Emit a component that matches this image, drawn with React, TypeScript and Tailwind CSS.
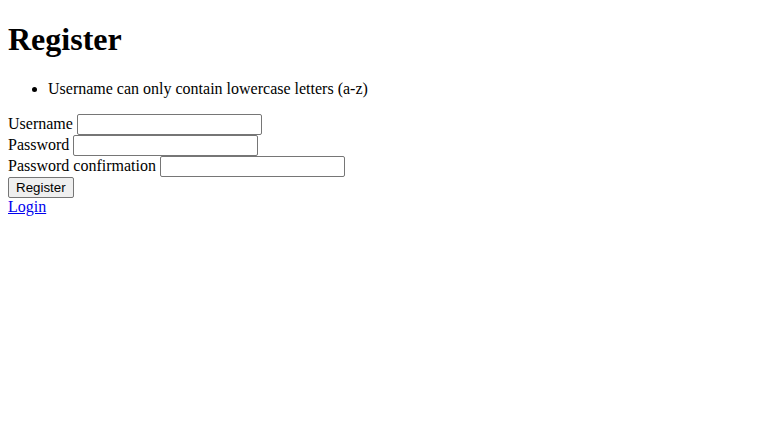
import React from "react";

const inputCls =
  "inline-block align-baseline w-[185px] h-[21px] border border-[#767676] rounded-[2px] bg-white px-[2px] py-[1px] text-[13.333px] [font-family:'Liberation_Sans',Arial,sans-serif] leading-[normal]";

export default function App() {
  return (
    <div className="min-h-[441px] bg-white text-black [font-family:'Liberation_Serif','Times_New_Roman',serif] text-[16px] leading-[normal] px-[8px] pt-[21.44px]">
      <h1 className="text-[32px] font-bold leading-[normal]">Register</h1>
      <ul className="list-disc pl-[40px] mt-[21.44px] mb-[16px]">
        <li>Username can only contain lowercase letters (a-z)</li>
      </ul>
      <form>
        <div className="h-[21px]">
          <label htmlFor="u">Username</label> <input id="u" type="text" className={inputCls} />
        </div>
        <div className="h-[21px]">
          <label htmlFor="p">Password</label> <input id="p" type="password" className={inputCls} />
        </div>
        <div className="h-[21px]">
          <label htmlFor="pc">Password confirmation</label> <input id="pc" type="password" className={inputCls} />
        </div>
        <div className="h-[21px]">
          <button
            type="button"
            className="h-[21px] px-[7px] py-[1px] border border-[#767676] rounded-[2px] bg-[#efefef] text-[13.333px] [font-family:'Liberation_Sans',Arial,sans-serif] leading-[normal]"
          >
            Register
          </button>
        </div>
      </form>
      <a href="#" className="text-[#0000ee] underline">
        Login
      </a>
    </div>
  );
}
